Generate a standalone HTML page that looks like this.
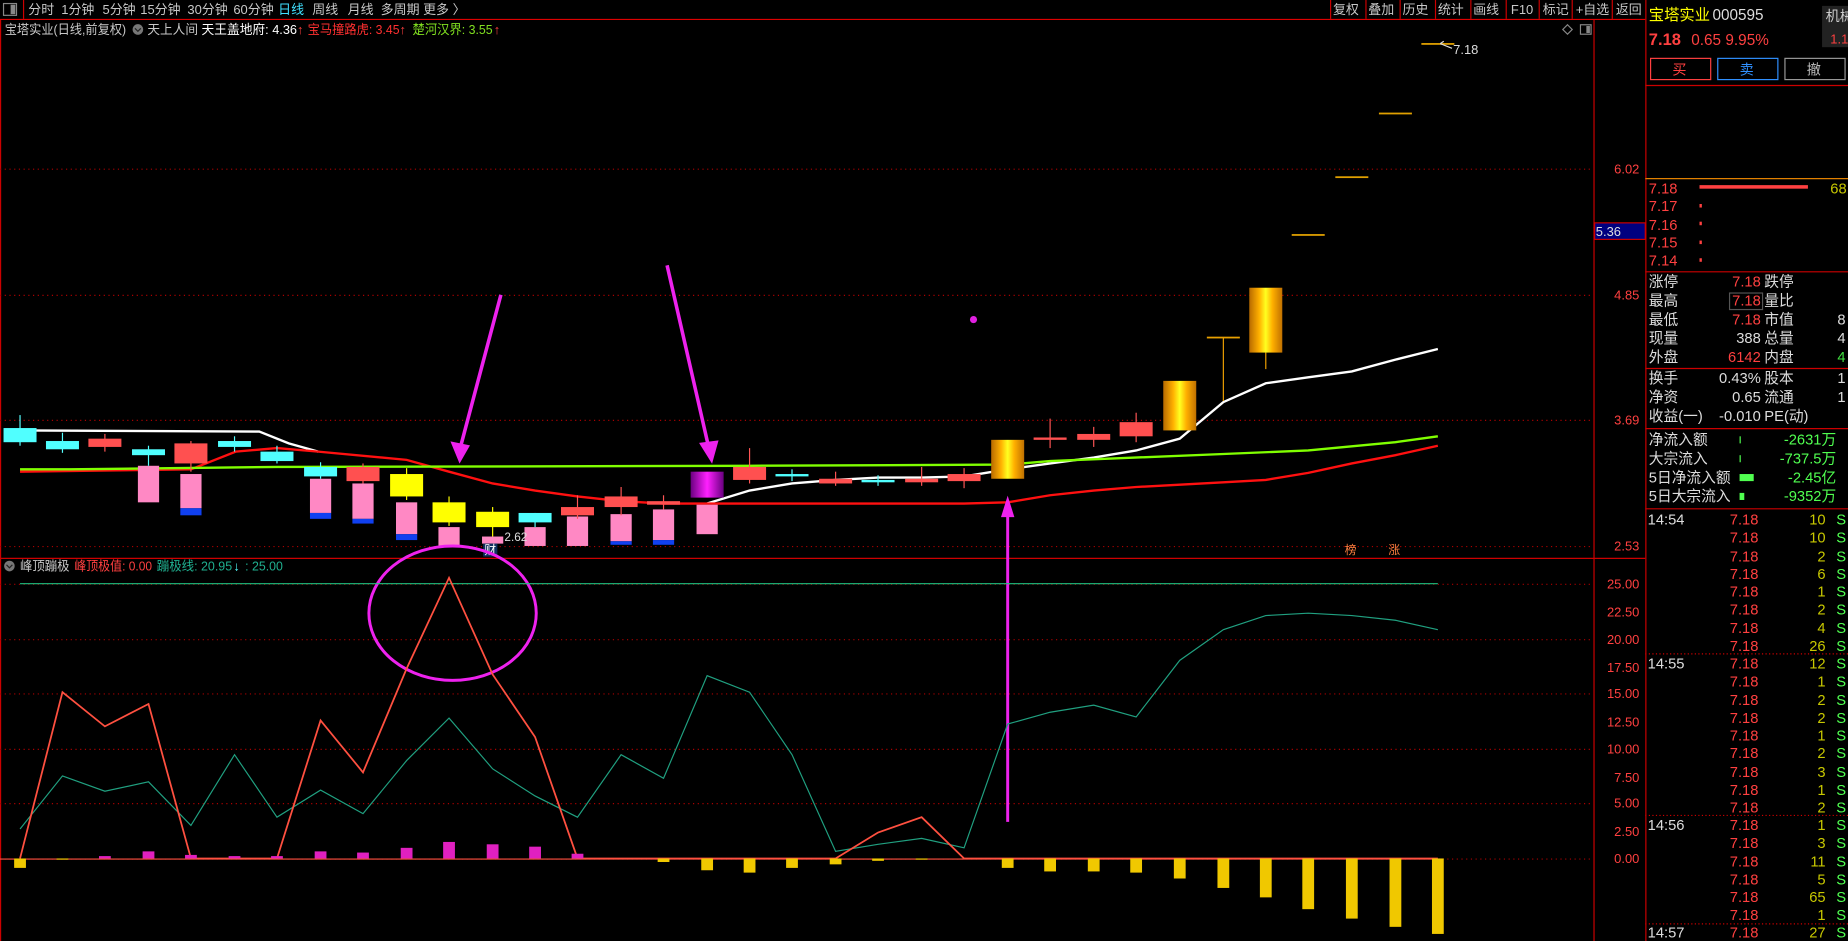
<!DOCTYPE html>
<html><head><meta charset="utf-8"><style>
html,body{margin:0;padding:0;background:#000;overflow:hidden;width:1848px;height:941px}
svg{display:block}
text{font-family:"Liberation Sans","Noto Sans CJK SC",sans-serif}
</style></head><body>
<svg width="1848" height="941" viewBox="0 0 1568 798" preserveAspectRatio="none" xmlns="http://www.w3.org/2000/svg">
<defs>
<linearGradient id="gold" x1="0" x2="1" y1="0" y2="0">
<stop offset="0" stop-color="#b86a00"/><stop offset="0.3" stop-color="#ffb000"/><stop offset="0.5" stop-color="#ffff20"/><stop offset="0.7" stop-color="#ffb000"/><stop offset="1" stop-color="#c07000"/></linearGradient>
<linearGradient id="purp" x1="0" x2="1"><stop offset="0" stop-color="#6a0080"/><stop offset="0.5" stop-color="#ff20ff"/><stop offset="1" stop-color="#6a0080"/></linearGradient>
</defs>
<rect width="1568" height="798" fill="#000"/>
<!-- toolbar -->
<g font-size="11" fill="#c8c8c8">
<rect x="3" y="3" width="11" height="10" fill="none" stroke="#888"/><rect x="9" y="4" width="4" height="8" fill="#888"/>
<line x1="20" y1="0" x2="20" y2="16" stroke="#c00"/>
<text x="24" y="12">分时</text><text x="52" y="12">1分钟</text><text x="87" y="12">5分钟</text><text x="119" y="12">15分钟</text><text x="159" y="12">30分钟</text><text x="198" y="12">60分钟</text>
<text x="236" y="12" fill="#40e0ff">日线</text><text x="265" y="12">周线</text><text x="295" y="12">月线</text><text x="323" y="12">多周期</text><text x="359" y="12">更多 〉</text>
<text x="1131" y="12">复权</text><text x="1161" y="12">叠加</text><text x="1190" y="12">历史</text><text x="1220" y="12">统计</text><text x="1250" y="12">画线</text><text x="1282" y="12">F10</text><text x="1309" y="12">标记</text><text x="1337" y="12">+自选</text><text x="1371" y="12">返回</text>
</g>
<g stroke="#c00" stroke-width="1">
<line x1="1129" y1="0" x2="1129" y2="16"/><line x1="1159" y1="0" x2="1159" y2="16"/><line x1="1188" y1="0" x2="1188" y2="16"/><line x1="1218" y1="0" x2="1218" y2="16"/><line x1="1248" y1="0" x2="1248" y2="16"/><line x1="1278" y1="0" x2="1278" y2="16"/><line x1="1306" y1="0" x2="1306" y2="16"/><line x1="1334" y1="0" x2="1334" y2="16"/><line x1="1368" y1="0" x2="1368" y2="16"/>
</g>
<line x1="0" y1="16.5" x2="1396" y2="16.5" stroke="#d00"/>
<!-- chart header -->
<g font-size="11">
<text x="4" y="29" fill="#c8c8c8" textLength="103" lengthAdjust="spacingAndGlyphs">宝塔实业(日线,前复权)</text>
<circle cx="117" cy="25" r="4.5" fill="#777"/><path d="M114.5 24 l2.5 2.5 l2.5-2.5" stroke="#222" fill="none"/>
<text x="125" y="29" fill="#c8c8c8" textLength="43" lengthAdjust="spacingAndGlyphs">天上人间</text>
<text x="171" y="29" fill="#fff" textLength="81" lengthAdjust="spacingAndGlyphs">天王盖地府: 4.36</text><text x="252" y="29" fill="#ff4040">↑</text>
<text x="261" y="29" fill="#ff3030" textLength="78" lengthAdjust="spacingAndGlyphs">宝马撞路虎: 3.45</text><text x="339" y="29" fill="#ff4040">↑</text>
<text x="350" y="29" fill="#80e020" textLength="68" lengthAdjust="spacingAndGlyphs">楚河汉界: 3.55</text><text x="419" y="29" fill="#ff4040">↑</text>
</g>
<path d="M1330 21 l4 4 l-4 4 l-4-4z" fill="none" stroke="#888"/>
<rect x="1341" y="21" width="9" height="8" fill="none" stroke="#888"/><rect x="1346" y="22" width="3" height="6" fill="#888"/>
<!-- axes -->
<line x1="1352.5" y1="17" x2="1352.5" y2="798" stroke="#c00"/>
<line x1="1396.5" y1="0" x2="1396.5" y2="798" stroke="#c00"/>
<line x1="0.5" y1="17" x2="0.5" y2="798" stroke="#c00"/>
<line x1="0" y1="473.5" x2="1396" y2="473.5" stroke="#c00"/>
<line x1="1352" y1="193" x2="1396" y2="193" stroke="#c00"/>
<rect x="1353" y="189" width="43" height="14" fill="#000080" stroke="#c00"/>
<text x="1354" y="200" font-size="11" fill="#ddd">5.36</text>
<g stroke="#a00" stroke-dasharray="1,3">
<line x1="0" y1="143.5" x2="1352" y2="143.5"/><line x1="0" y1="250.5" x2="1352" y2="250.5"/><line x1="0" y1="356.5" x2="1352" y2="356.5"/><line x1="0" y1="463.5" x2="1352" y2="463.5"/>
<line x1="0" y1="495.5" x2="1352" y2="495.5"/><line x1="0" y1="542.5" x2="1352" y2="542.5"/><line x1="0" y1="588.5" x2="1352" y2="588.5"/><line x1="0" y1="635.5" x2="1352" y2="635.5"/><line x1="0" y1="681.5" x2="1352" y2="681.5"/><line x1="0" y1="728.5" x2="1352" y2="728.5"/>
</g>
<g font-size="11" fill="#ff4040" text-anchor="end">
<text x="1391" y="147">6.02</text><text x="1391" y="254">4.85</text><text x="1391" y="360">3.69</text><text x="1391" y="467">2.53</text>
<text x="1391" y="499">25.00</text><text x="1391" y="523">22.50</text><text x="1391" y="546">20.00</text><text x="1391" y="570">17.50</text><text x="1391" y="592">15.00</text><text x="1391" y="616">12.50</text><text x="1391" y="639">10.00</text><text x="1391" y="663">7.50</text><text x="1391" y="685">5.00</text><text x="1391" y="709">2.50</text><text x="1391" y="732">0.00</text>
</g>
<!-- price lines -->
<polyline fill="none" stroke="#fff" stroke-width="2" points="17,365 220,366 245,376 270,383"/>
<polyline fill="none" stroke="#fff" stroke-width="2" points="600,427 636,416 672,410 709,407 745,405 782,405 818,404 855,398 891,393 928,388 964,382 1001,372 1038,341 1074,325 1110,320 1147,315 1184,305 1220,296"/>
<polyline fill="none" stroke="#ff1010" stroke-width="2" points="17,400 162,398 200,383 235,380 270,383 345,390 381,400 418,410 454,416 490,421 527,425 563,427 600,427 818,427 855,426 891,420 928,416 964,413 1001,411 1038,409 1074,407 1110,401 1147,393 1184,386 1220,378"/>
<polyline fill="none" stroke="#80ff00" stroke-width="2" points="17,398 60,398 235,396 636,395 855,394 891,391 1038,385 1110,382 1184,375 1220,370"/>
<!-- pink bars -->
<g fill="#ff88c4">
<rect x="117" y="395" width="18" height="31"/><rect x="153" y="402" width="18" height="29"/><rect x="263" y="406" width="18" height="29"/><rect x="299" y="410" width="18" height="30"/><rect x="336" y="426" width="18" height="27"/><rect x="372" y="447" width="18" height="16"/><rect x="409" y="455" width="18" height="6"/><rect x="445" y="447" width="18" height="16"/><rect x="481" y="438" width="18" height="25"/><rect x="518" y="436" width="18" height="23"/><rect x="554" y="432" width="18" height="26"/><rect x="591" y="428" width="18" height="25"/>
</g>
<g fill="#1040f0">
<rect x="153" y="431" width="18" height="6"/><rect x="263" y="435" width="18" height="5"/><rect x="299" y="440" width="18" height="4"/><rect x="336" y="453" width="18" height="5"/><rect x="518" y="459" width="18" height="3"/><rect x="554" y="458" width="18" height="4"/>
</g>
<!-- candles -->
<g stroke-width="1">
<line x1="17" y1="352" x2="17" y2="378" stroke="#5ff"/><rect x="3" y="363" width="28" height="12" fill="#50ffff"/>
<line x1="53" y1="367" x2="53" y2="384" stroke="#5ff"/><rect x="39" y="374" width="28" height="7" fill="#50ffff"/>
<line x1="89" y1="368" x2="89" y2="383" stroke="#f55"/><rect x="75" y="372" width="28" height="7" fill="#ff5050"/>
<line x1="126" y1="378" x2="126" y2="395" stroke="#5ff"/><rect x="112" y="381" width="28" height="5" fill="#50ffff"/>
<line x1="162" y1="374" x2="162" y2="400" stroke="#f55"/><rect x="148" y="376" width="28" height="17" fill="#ff5050"/>
<line x1="199" y1="370" x2="199" y2="383" stroke="#5ff"/><rect x="185" y="374" width="28" height="5" fill="#50ffff"/>
<line x1="235" y1="378" x2="235" y2="393" stroke="#5ff"/><rect x="221" y="383" width="28" height="8" fill="#50ffff"/>
<line x1="272" y1="392" x2="272" y2="406" stroke="#5ff"/><rect x="258" y="396" width="28" height="8" fill="#50ffff"/>
<line x1="308" y1="393" x2="308" y2="410" stroke="#f55"/><rect x="294" y="396" width="28" height="12" fill="#ff5050"/>
<line x1="345" y1="397" x2="345" y2="424" stroke="#ff0"/><rect x="331" y="402" width="28" height="19" fill="#ffff00"/>
<line x1="381" y1="421" x2="381" y2="446" stroke="#ff0"/><rect x="367" y="426" width="28" height="17" fill="#ffff00"/>
<line x1="418" y1="430" x2="418" y2="455" stroke="#ff0"/><rect x="404" y="434" width="28" height="13" fill="#ffff00"/>
<line x1="454" y1="435" x2="454" y2="447" stroke="#5ff"/><rect x="440" y="435" width="28" height="8" fill="#50ffff"/>
<line x1="490" y1="420" x2="490" y2="440" stroke="#f55"/><rect x="476" y="430" width="28" height="7" fill="#ff5050"/>
<line x1="527" y1="413" x2="527" y2="437" stroke="#f55"/><rect x="513" y="421" width="28" height="9" fill="#ff5050"/>
<line x1="563" y1="420" x2="563" y2="432" stroke="#f55"/><rect x="549" y="425" width="28" height="3" fill="#ff5050"/>
<rect x="586" y="400" width="28" height="22" fill="url(#purp)"/>
<line x1="636" y1="380" x2="636" y2="410" stroke="#f55"/><rect x="622" y="396" width="28" height="11" fill="#ff5050"/>
<line x1="672" y1="398" x2="672" y2="408" stroke="#5ff"/><rect x="658" y="402" width="28" height="2" fill="#50ffff"/>
<line x1="709" y1="400" x2="709" y2="412" stroke="#f55"/><rect x="695" y="406" width="28" height="4" fill="#ff5050"/>
<line x1="745" y1="403" x2="745" y2="412" stroke="#5ff"/><rect x="731" y="407" width="28" height="2" fill="#50ffff"/>
<line x1="782" y1="396" x2="782" y2="412" stroke="#f55"/><rect x="768" y="406" width="28" height="3" fill="#ff5050"/>
<line x1="818" y1="397" x2="818" y2="414" stroke="#f55"/><rect x="804" y="402" width="28" height="6" fill="#ff5050"/>
<rect x="841" y="373" width="28" height="33" fill="url(#gold)"/>
<line x1="891" y1="355" x2="891" y2="380" stroke="#f55"/><rect x="877" y="371" width="28" height="2" fill="#ff5050"/>
<line x1="928" y1="362" x2="928" y2="379" stroke="#f55"/><rect x="914" y="368" width="28" height="5" fill="#ff5050"/>
<line x1="964" y1="350" x2="964" y2="375" stroke="#f55"/><rect x="950" y="358" width="28" height="12" fill="#ff5050"/>
<rect x="987" y="323" width="28" height="42" fill="url(#gold)"/>
<line x1="1038" y1="286" x2="1038" y2="340" stroke="#f0a000"/><rect x="1024" y="285.5" width="28" height="1.5" fill="#e8a000"/>
<line x1="1074" y1="299" x2="1074" y2="313" stroke="#f0a000"/><rect x="1060" y="244" width="28" height="55" fill="url(#gold)"/>
<rect x="1096" y="198.5" width="28" height="1.5" fill="#e0a000"/>
<rect x="1133" y="149.5" width="28" height="1.5" fill="#e0a000"/>
<rect x="1170" y="95.5" width="28" height="1.5" fill="#e0a000"/>
<rect x="1206" y="36.5" width="28" height="1.5" fill="#e0a000"/>
</g>
<text x="1233" y="46" font-size="11" fill="#ddd">7.18</text>
<path d="M1232 41 l-10-4 m0 0 l3-2" stroke="#ddd" fill="none"/>
<text x="428" y="459" font-size="10" fill="#ddd">2.62</text>
<rect x="410" y="461" width="12" height="11" fill="#103060"/><text x="411" y="470" font-size="10" fill="#fff">财</text>
<text x="1141" y="470" font-size="10" fill="#ff8040">榜</text><text x="1178" y="470" font-size="10" fill="#ff8040">涨</text>
<circle cx="826" cy="271" r="3" fill="#e020e0"/>
<!-- arrows -->
<g stroke="#ee22ee" stroke-width="3" fill="#ee22ee">
<line x1="425" y1="250" x2="391" y2="378"/><path d="M383 375 L390 392 L398 378z" stroke-width="1"/>
<line x1="566" y1="225" x2="601" y2="378"/><path d="M594 376 L604 392 L609 374z" stroke-width="1"/>
<line x1="855" y1="697" x2="855" y2="436" stroke-width="2.5"/><path d="M850 438 L855 422 L860 438z" stroke-width="1"/>
</g>
<ellipse cx="384" cy="520" rx="71" ry="57" fill="none" stroke="#ee22ee" stroke-width="2.5"/>
<!-- indicator header -->
<g font-size="11">
<circle cx="8" cy="480" r="4.5" fill="#777"/><path d="M5.5 479 l2.5 2.5 l2.5-2.5" stroke="#222" fill="none"/>
<text x="17" y="484" fill="#c8c8c8" textLength="42" lengthAdjust="spacingAndGlyphs">峰顶蹦极</text>
<text x="63" y="484" fill="#ff4040" textLength="66" lengthAdjust="spacingAndGlyphs">峰顶极值: 0.00</text>
<text x="133" y="484" fill="#20b090" textLength="64" lengthAdjust="spacingAndGlyphs">蹦极线: 20.95</text><text x="198" y="484" fill="#5ff">↓</text>
<text x="208" y="484" fill="#20b090" textLength="32" lengthAdjust="spacingAndGlyphs">: 25.00</text>
</g>
<line x1="17" y1="495" x2="1220" y2="495" stroke="#20c080" stroke-width="1"/>
<polyline fill="none" stroke="#20a080" stroke-width="1" points="17,703 53,658 89,671 126,663 162,700 199,640 235,693 272,670 308,690 345,645 381,609 418,652 454,675 490,693 527,640 563,660 600,573 636,587 672,640 709,722 745,716 782,711 818,719 855,614 891,604 928,598 964,608 1001,560 1038,534 1074,522 1110,520 1147,522 1184,526 1220,534"/>
<polyline fill="none" stroke="#ff5040" stroke-width="1.5" points="17,728 53,587 89,616 126,597 162,728 235,728 272,611 308,655 345,567 381,490 418,572 454,625 490,728 709,728 745,706 782,693 818,728 1220,728"/>
<line x1="0" y1="728.5" x2="1220" y2="728.5" stroke="#ff5040" stroke-width="1"/>
<g fill="#e020c0">
<rect x="84" y="726" width="10" height="2"/><rect x="121" y="722" width="10" height="6"/><rect x="157" y="725" width="10" height="3"/><rect x="194" y="726" width="10" height="2"/><rect x="230" y="726" width="10" height="2"/><rect x="267" y="722" width="10" height="6"/><rect x="303" y="723" width="10" height="5"/><rect x="340" y="719" width="10" height="9"/><rect x="376" y="714" width="10" height="14"/><rect x="413" y="716" width="10" height="12"/><rect x="449" y="718" width="10" height="10"/><rect x="485" y="724" width="10" height="4"/>
</g>
<g fill="#f0c800">
<rect x="12" y="728" width="10" height="8"/><rect x="48" y="728" width="10" height="1"/><rect x="558" y="728" width="10" height="3"/><rect x="595" y="728" width="10" height="10"/><rect x="631" y="728" width="10" height="12"/><rect x="667" y="728" width="10" height="8"/><rect x="704" y="728" width="10" height="5"/><rect x="740" y="728" width="10" height="2"/><rect x="777" y="728" width="10" height="1"/><rect x="850" y="728" width="10" height="8"/><rect x="886" y="728" width="10" height="11"/><rect x="923" y="728" width="10" height="11"/><rect x="959" y="728" width="10" height="12"/><rect x="996" y="728" width="10" height="17"/><rect x="1033" y="728" width="10" height="25"/><rect x="1069" y="728" width="10" height="33"/><rect x="1105" y="728" width="10" height="43"/><rect x="1142" y="728" width="10" height="51"/><rect x="1179" y="728" width="10" height="58"/><rect x="1215" y="728" width="10" height="64"/>
</g>
<!-- right panel -->
<g font-size="13">
<text x="1399" y="17" fill="#ffff00">宝塔实业</text><text x="1453" y="17" fill="#ddd">000595</text>
<text x="1399" y="38" fill="#ff4040" font-weight="bold" font-size="14">7.18</text>
<text x="1435" y="38" fill="#ff4040">0.65</text><text x="1464" y="38" fill="#ff4040">9.95%</text>
</g>
<rect x="1546" y="5" width="22" height="35" fill="#222"/>
<text x="1549" y="18" font-size="12" fill="#ccc">机械</text><text x="1553" y="37" font-size="11" fill="#ff4040">1.1</text>
<rect x="1400.5" y="49.5" width="51" height="18" fill="none" stroke="#ff4040"/><text x="1419" y="63" font-size="12" fill="#ff4040">买</text>
<rect x="1457.5" y="49.5" width="51" height="18" fill="none" stroke="#3090ff"/><text x="1476" y="63" font-size="12" fill="#3090ff">卖</text>
<rect x="1514.5" y="49.5" width="51" height="18" fill="none" stroke="#999"/><text x="1533" y="63" font-size="12" fill="#bbb">撤</text>
<rect x="1571.5" y="49.5" width="10" height="18" fill="none" stroke="#999"/>
<line x1="1396" y1="72.5" x2="1568" y2="72.5" stroke="#c00"/>
<line x1="1396" y1="151.5" x2="1568" y2="151.5" stroke="#e08000"/>
<g font-size="12.5" fill="#ff4040">
<text x="1399" y="164">7.18</text><text x="1399" y="179">7.17</text><text x="1399" y="195">7.16</text><text x="1399" y="210">7.15</text><text x="1399" y="225">7.14</text>
</g>
<rect x="1442" y="157" width="92" height="3" fill="#ff4040"/>
<rect x="1442" y="173" width="2" height="3" fill="#ff4040"/><rect x="1442" y="188" width="2" height="3" fill="#ff4040"/><rect x="1442" y="204" width="2" height="3" fill="#ff4040"/><rect x="1442" y="219" width="2" height="3" fill="#ff4040"/>
<text x="1553" y="164" font-size="12.5" fill="#c8c800">68</text>
<line x1="1396" y1="230.5" x2="1568" y2="230.5" stroke="#c00"/>
<g font-size="12.5" fill="#ddd">
<text x="1399" y="243">涨停</text><text x="1399" y="259">最高</text><text x="1399" y="275">最低</text><text x="1399" y="291">现量</text><text x="1399" y="307">外盘</text>
<text x="1497" y="243">跌停</text><text x="1497" y="259">量比</text><text x="1497" y="275">市值</text><text x="1497" y="291">总量</text><text x="1497" y="307">内盘</text>
<text x="1559" y="275">8</text><text x="1559" y="291">4</text><text x="1559" y="307" fill="#40e040">4</text>
</g>
<g font-size="12.5" text-anchor="end">
<text x="1494" y="243" fill="#ff4040">7.18</text><text x="1494" y="259" fill="#ff4040">7.18</text><text x="1494" y="275" fill="#ff4040">7.18</text><text x="1494" y="291" fill="#ddd">388</text><text x="1494" y="307" fill="#ff4040">6142</text>
</g>
<rect x="1467.5" y="248.5" width="28" height="14" fill="none" stroke="#555"/>
<line x1="1396" y1="312.5" x2="1568" y2="312.5" stroke="#c00"/>
<g font-size="12.5" fill="#ddd">
<text x="1399" y="325">换手</text><text x="1399" y="341">净资</text><text x="1399" y="357">收益(一)</text>
<text x="1497" y="325">股本</text><text x="1497" y="341">流通</text><text x="1497" y="357">PE(动)</text>
<text x="1559" y="325">1</text><text x="1559" y="341">1</text>
<g text-anchor="end"><text x="1494" y="325">0.43%</text><text x="1494" y="341">0.65</text><text x="1494" y="357">-0.010</text></g>
</g>
<line x1="1396" y1="363.5" x2="1568" y2="363.5" stroke="#c00"/>
<g font-size="12.5" fill="#ddd">
<text x="1399" y="377">净流入额</text><text x="1399" y="393">大宗流入</text><text x="1399" y="409">5日净流入额</text><text x="1399" y="425">5日大宗流入</text>
</g>
<g fill="#50ff50"><rect x="1476" y="370" width="1" height="6"/><rect x="1476" y="386" width="1" height="6"/><rect x="1476" y="402" width="12" height="6"/><rect x="1476" y="418" width="4" height="6"/></g>
<g font-size="12.5" fill="#50ff50" text-anchor="end">
<text x="1558" y="377">-2631万</text><text x="1558" y="393">-737.5万</text><text x="1558" y="409">-2.45亿</text><text x="1558" y="425">-9352万</text>
</g>
<line x1="1396" y1="431.5" x2="1568" y2="431.5" stroke="#c00"/>
<g font-size="12.5">
<g fill="#ddd"><text x="1398" y="445">14:54</text><text x="1398" y="567">14:55</text><text x="1398" y="704">14:56</text><text x="1398" y="795">14:57</text></g>
<g fill="#ff4040" text-anchor="end">
<text x="1492" y="445">7.18</text><text x="1492" y="460">7.18</text><text x="1492" y="476">7.18</text><text x="1492" y="491">7.18</text><text x="1492" y="506">7.18</text><text x="1492" y="521">7.18</text><text x="1492" y="537">7.18</text><text x="1492" y="552">7.18</text>
<text x="1492" y="567">7.18</text><text x="1492" y="582">7.18</text><text x="1492" y="598">7.18</text><text x="1492" y="613">7.18</text><text x="1492" y="628">7.18</text><text x="1492" y="643">7.18</text><text x="1492" y="659">7.18</text><text x="1492" y="674">7.18</text><text x="1492" y="689">7.18</text>
<text x="1492" y="704">7.18</text><text x="1492" y="719">7.18</text><text x="1492" y="735">7.18</text><text x="1492" y="750">7.18</text><text x="1492" y="765">7.18</text><text x="1492" y="780">7.18</text><text x="1492" y="795">7.18</text>
</g>
<g fill="#c8c800" text-anchor="end">
<text x="1549" y="445">10</text><text x="1549" y="460">10</text><text x="1549" y="476">2</text><text x="1549" y="491">6</text><text x="1549" y="506">1</text><text x="1549" y="521">2</text><text x="1549" y="537">4</text><text x="1549" y="552">26</text>
<text x="1549" y="567">12</text><text x="1549" y="582">1</text><text x="1549" y="598">2</text><text x="1549" y="613">2</text><text x="1549" y="628">1</text><text x="1549" y="643">2</text><text x="1549" y="659">3</text><text x="1549" y="674">1</text><text x="1549" y="689">2</text>
<text x="1549" y="704">1</text><text x="1549" y="719">3</text><text x="1549" y="735">11</text><text x="1549" y="750">5</text><text x="1549" y="765">65</text><text x="1549" y="780">1</text><text x="1549" y="795">27</text>
</g>
<g fill="#50ff50">
<text x="1558" y="445">S</text><text x="1558" y="460">S</text><text x="1558" y="476">S</text><text x="1558" y="491">S</text><text x="1558" y="506">S</text><text x="1558" y="521">S</text><text x="1558" y="537">S</text><text x="1558" y="552">S</text>
<text x="1558" y="567">S</text><text x="1558" y="582">S</text><text x="1558" y="598">S</text><text x="1558" y="613">S</text><text x="1558" y="628">S</text><text x="1558" y="643">S</text><text x="1558" y="659">S</text><text x="1558" y="674">S</text><text x="1558" y="689">S</text>
<text x="1558" y="704">S</text><text x="1558" y="719">S</text><text x="1558" y="735">S</text><text x="1558" y="750">S</text><text x="1558" y="765">S</text><text x="1558" y="780">S</text><text x="1558" y="795">S</text>
</g>
</g>
<g stroke="#c00" stroke-dasharray="1,2"><line x1="1396" y1="554.5" x2="1568" y2="554.5"/><line x1="1396" y1="691.5" x2="1568" y2="691.5"/><line x1="1396" y1="783.5" x2="1568" y2="783.5"/></g>
</svg>
</body></html>
